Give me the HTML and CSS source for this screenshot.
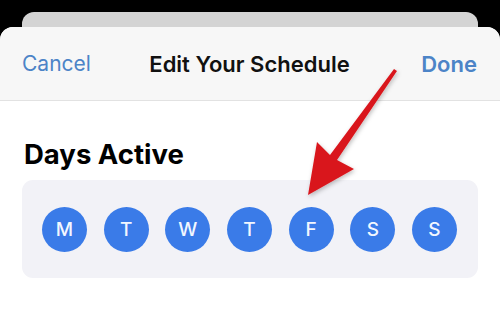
FILE: index.html
```html
<!DOCTYPE html>
<html lang="en">
<head>
  <meta charset="UTF-8">
  <title>Edit Your Schedule</title>
  <link rel="stylesheet" href="styles.css">
</head>
<body>
  <div class="screen">
    <div class="card-behind"></div>
    <div class="sheet">
      <header class="nav">
        <span class="nav-btn cancel">Cancel</span>
        <span class="nav-title">Edit Your Schedule</span>
        <span class="nav-btn done">Done</span>
      </header>
      <section class="content">
        <h2 class="section-title">Days Active</h2>
        <div class="days">
          <span class="day">M</span>
          <span class="day">T</span>
          <span class="day">W</span>
          <span class="day">T</span>
          <span class="day">F</span>
          <span class="day">S</span>
          <span class="day">S</span>
        </div>
      </section>
    </div>
    <!-- annotation arrow drawn over the screenshot -->
    <svg class="arrow" width="500" height="315" viewBox="0 0 500 315" xmlns="http://www.w3.org/2000/svg">
      <defs>
        <filter id="shadow" x="-20%" y="-20%" width="140%" height="140%">
          <feDropShadow dx="1" dy="2" stdDeviation="2" flood-color="#000" flood-opacity="0.25"/>
        </filter>
      </defs>
      <polygon filter="url(#shadow)" fill="#d9161c"
        points="394,57 397,59 337,148 354,157 308,183 317,130 330,143"/>
    </svg>
  </div>
</body>
</html>
```
FILE: styles.css
```css
html, body {
  margin: 0;
  padding: 0;
}
body {
  width: 500px;
  height: 315px;
  overflow: hidden;
  background-color: #000;
  font-family: Inter, "Noto Sans", sans-serif;
}
.screen {
  position: relative;
  height: 315px;
}
.card-behind {
  margin: 12px 22px 0;
  height: 30px;
  border-radius: 12px 12px 0 0;
  background-color: #d4d4d4;
}
.sheet {
  margin-top: -15px;
  height: 288px;
  border-radius: 13px 13px 0 0;
  background-color: #fff;
  overflow: hidden;
}
.nav {
  display: grid;
  grid-template-columns: 1fr auto 1fr;
  align-items: center;
  height: 73px;
  padding: 0 23px 0 22px;
  background-color: #f7f7f7;
  border-bottom: 1px solid #e2e2e2;
  font-size: 21px;
}
.nav-btn {
  color: #4c84c7;
}
.done {
  justify-self: end;
  font-size: 22px;
  font-weight: 600;
}
.nav-title {
  color: #111;
  font-size: 22px;
  font-weight: 600;
}
.content {
  padding: 37px 22px 0;
}
.section-title {
  margin: 0 0 9px 2px;
  font-size: 27.5px;
  line-height: 33px;
  font-weight: 700;
  color: #000;
}
.days {
  display: flex;
  justify-content: space-between;
  align-items: center;
  height: 98px;
  padding: 0 21px 0 20px;
  border-radius: 11px;
  background-color: #f2f2f7;
}
.day {
  display: flex;
  align-items: center;
  justify-content: center;
  width: 45px;
  height: 45px;
  border-radius: 50%;
  background-color: #3a7be8;
  color: #f2f7ff;
  font-size: 19px;
  font-weight: 500;
}
.arrow {
  position: absolute;
  top: 0;
  left: 0;
}
```
